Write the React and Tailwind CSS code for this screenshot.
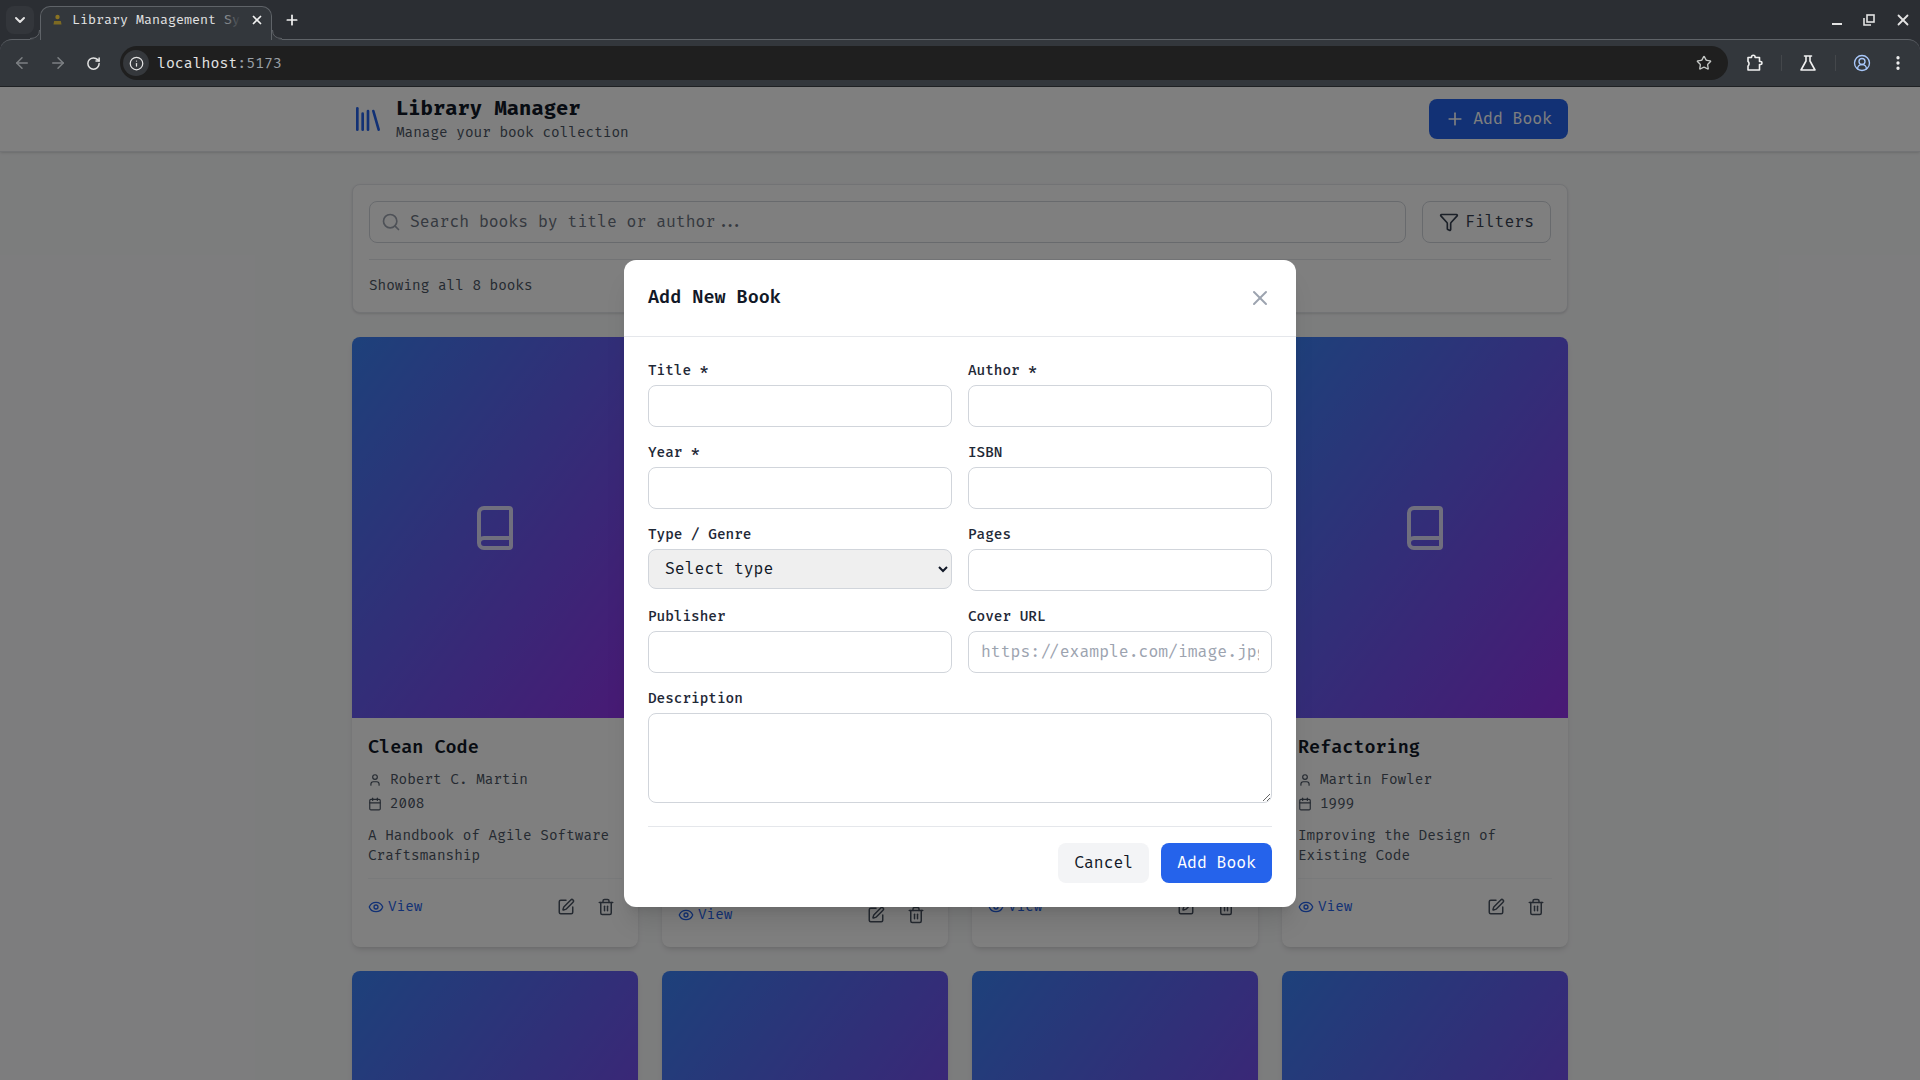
import React from "react";
import {
  ArrowLeft, ArrowRight, RotateCw, Info, Star, CircleUserRound, EllipsisVertical,
  ChevronDown, Plus, X, Library, Search, Filter, Book, User, Calendar, Eye, SquarePen, Trash2,
} from "lucide-react";

const books = [
  { title: "Clean Code", author: "Robert C. Martin", year: "2008", desc: ["A Handbook of Agile Software", "Craftsmanship"] },
  { title: "Pragmatic Programmer", author: "David Thomas", year: "1999", desc: ["Your Journey to Mastery"], push: true },
  { title: "Design Patterns", author: "Erich Gamma", year: "1994", desc: ["Elements of Reusable", "Object-Oriented Software"] },
  { title: "Refactoring", author: "Martin Fowler", year: "1999", desc: ["Improving the Design of", "Existing Code"] },
];

function BrowserChrome() {
  return (
    <div className="shrink-0 bg-[#2b2e33] text-[#e3e3e3]">
      <div className="relative flex h-[39px] items-start">
        <div className="ml-[6px] mt-[6px] flex h-[28px] w-[28px] items-center justify-center rounded-lg bg-[#33363b]">
          <ChevronDown size={16} strokeWidth={3} className="text-[#e3e3e3]" />
        </div>
        <div className="relative z-10 ml-[6px] mt-[6px] flex h-[34px] w-[232px] items-center rounded-t-[10px] border border-b-0 border-[#5f6368] bg-[#33373c] pb-[7px] pl-[11px]">
          <svg width="11" height="11" viewBox="0 0 10 11" className="shrink-0 -translate-y-px">
            <circle cx="5" cy="3" r="2.2" fill="#8a7322" />
            <path d="M1 10.5 L1.6 7 H8.4 L9 10.5 Z" fill="#7d6a22" />
          </svg>
          <div className="relative ml-[9px] w-[169px] overflow-hidden whitespace-nowrap text-[13px] leading-[18px] text-[#e3e3e3]">
            Library Management System
            <div className="absolute inset-y-0 right-0 w-[30px] bg-gradient-to-r from-[#33373c00] to-[#33373c]" />
          </div>
          <X size={14} strokeWidth={3} className="ml-[9px] text-[#f1f1f1]" />
          <svg width="10" height="10" viewBox="0 0 10 10" className="absolute bottom-0 left-[-11px]">
            <path d="M10 0 Q10 9.5 0 9.5 L0 10 L10 10Z" fill="#33373c" />
            <path d="M9.5 0 Q9.5 8.5 0 8.5" stroke="#5f6368" fill="none" />
          </svg>
          <svg width="10" height="10" viewBox="0 0 10 10" className="absolute bottom-0 right-[-11px]">
            <path d="M0 0 Q0 9.5 10 9.5 L10 10 L0 10Z" fill="#33373c" />
            <path d="M0.5 0 Q0.5 8.5 10 8.5" stroke="#5f6368" fill="none" />
          </svg>
        </div>
        <Plus size={16} strokeWidth={2.6} className="ml-[12px] mt-[12px] text-[#f1f1f1]" />
        <div className="absolute right-[78px] top-[23px] h-[2px] w-[10px] bg-[#e3e3e3]" />
        <svg width="12" height="12" viewBox="0 0 12 12" fill="none" stroke="#e3e3e3" strokeWidth="1.6" className="absolute right-[45px] top-[14px]">
          <rect x="4" y="1" width="7" height="7" />
          <path d="M1 4v7h7" />
        </svg>
        <X size={18} strokeWidth={2.4} className="absolute right-[8px] top-[11px] text-[#e3e3e3]" />
      </div>
      <div className="flex h-[48px] items-center rounded-t-[12px] border-t border-b border-t-[#5f6368] border-b-[#1f2124] bg-[#33373c]">
        <ArrowLeft size={18} strokeWidth={2} className="ml-[13px] text-[#7d8084]" />
        <ArrowRight size={18} strokeWidth={2} className="ml-[18px] text-[#7d8084]" />
        <RotateCw size={15} strokeWidth={2.4} className="ml-[19px] text-[#e3e3e3]" />
        <div className="ml-[19px] flex h-[34px] w-[1608px] items-center rounded-full bg-[#1f1f1f] pl-[3px] pr-[16px]">
          <div className="flex h-[26px] w-[26px] items-center justify-center rounded-full bg-[#35383c]">
            <Info size={15} strokeWidth={2} className="text-[#e3e3e3]" />
          </div>
          <div className="ml-[8px] translate-y-px text-[14.5px] leading-[20px]">
            <span className="text-[#e3e3e3]">localhost</span>
            <span className="text-[#9aa0a6]">:5173</span>
          </div>
          <Star size={16} strokeWidth={2} className="ml-auto text-[#c4c7c5]" />
        </div>
        <svg width="18" height="18" viewBox="0 0 18 18" fill="none" stroke="#f1f1f1" strokeWidth="1.6" strokeLinejoin="round" className="ml-[18px]">
          <path d="M2 3.5H5.5V3a1.8 1.8 0 0 1 3.6 0V3.5H13.5V7.5H14.5a1.5 1.5 0 0 1 0 3H13.5V16H2V12a3 3 0 0 0 0-4.6Z" />
        </svg>
        <div className="ml-[17px] h-[16px] w-px bg-[#44474b]" />
        <svg width="18" height="18" viewBox="0 0 18 18" fill="none" stroke="#f1f1f1" strokeWidth="1.6" strokeLinejoin="round" strokeLinecap="round" className="ml-[17px]">
          <path d="M5.5 2H12.5M7 2V7L2 16H16L11 7V2" />
        </svg>
        <div className="ml-[18px] h-[16px] w-px bg-[#44474b]" />
        <CircleUserRound size={18} strokeWidth={1.8} className="ml-[17px] text-[#a8c7fa]" />
        <EllipsisVertical size={18} strokeWidth={2.4} className="ml-[18px] text-[#f1f1f1]" />
      </div>
    </div>
  );
}

function BookCard({ book }) {
  return (
    <div className="flex flex-col overflow-hidden rounded-lg bg-white shadow-md">
      <div className="flex aspect-[3/4] items-center justify-center bg-linear-to-br/srgb from-[#3b82f6] to-[#9333ea]">
        <Book size={48} className="text-white/80" />
      </div>
      {book.title && (
        <div className="px-4 pb-[15px] pt-4">
          <h3 className="mb-2 text-lg font-semibold leading-7 text-[#111827]">{book.title}</h3>
          <div className="mb-1 flex items-center gap-2 text-sm leading-5 text-[#4b5563]">
            <User size={14} />
            <span>{book.author}</span>
          </div>
          <div className="mb-3 flex items-center gap-2 text-sm leading-5 text-[#4b5563]">
            <Calendar size={14} />
            <span>{book.year}</span>
          </div>
          <div className={`text-sm leading-5 text-[#4b5563] ${book.push ? "h-[48px]" : "h-[40px]"}`}>
            {book.desc.map((d) => (
              <div key={d}>{d}</div>
            ))}
          </div>
          <div className="mt-3 flex items-center justify-between border-t border-[#f3f4f6] pt-[11px]">
            <div className="flex items-center gap-1 text-sm leading-5 text-[#2563eb]">
              <Eye size={16} />
              <span>View</span>
            </div>
            <div className="-mr-px flex items-center gap-1.5">
              <div className="p-2 text-[#4b5563]"><SquarePen size={18} /></div>
              <div className="p-2 text-[#4b5563]"><Trash2 size={18} /></div>
            </div>
          </div>
        </div>
      )}
    </div>
  );
}

function Field({ label, children }) {
  return (
    <div>
      <label className="mb-1 block text-sm font-medium leading-5 text-[#1f2937]">{label}</label>
      {children}
    </div>
  );
}

const inputCls = "block w-full rounded-lg border border-[#d1d5db] bg-white px-3 py-2 text-base leading-6 text-[#111827] outline-none placeholder:text-[#9ca3af]";

function Modal() {
  return (
    <div className="absolute inset-0 flex items-center justify-center bg-black/50">
      <div className="w-[672px] rounded-xl bg-white shadow-xl">
        <div className="flex items-center justify-between border-b border-[#e5e7eb] p-6">
          <h2 className="text-lg font-semibold leading-7 text-[#111827]">Add New Book</h2>
          <X size={24} className="text-[#9ca3af]" />
        </div>
        <div className="p-6">
          <div className="grid grid-cols-2 gap-4">
            <Field label="Title *"><input className={inputCls} /></Field>
            <Field label="Author *"><input className={inputCls} /></Field>
            <Field label="Year *"><input className={inputCls} /></Field>
            <Field label="ISBN"><input className={inputCls} /></Field>
            <Field label="Type / Genre">
              <select className="block h-[40px] w-full rounded-lg border border-[#d1d5db] bg-[#efefef] px-3 text-base text-[#111827]">
                <option>Select type</option>
              </select>
            </Field>
            <Field label="Pages"><input className={inputCls} /></Field>
            <Field label="Publisher"><input className={inputCls} /></Field>
            <Field label="Cover URL"><input className={inputCls} placeholder="https://example.com/image.jpg" /></Field>
          </div>
          <div className="mt-4">
            <Field label="Description"><textarea rows={3} className={inputCls} /></Field>
          </div>
          <div className="mt-[23px] flex justify-end gap-3 border-t border-[#e5e7eb] pt-4">
            <button className="rounded-lg bg-[#f3f4f6] px-4 py-2 text-base leading-6 text-[#111827]">Cancel</button>
            <button className="rounded-lg bg-[#2563eb] px-4 py-2 text-base leading-6 text-white">Add Book</button>
          </div>
        </div>
      </div>
    </div>
  );
}

export default function App() {
  return (
    <div className="flex h-screen flex-col overflow-hidden font-['Fira_Code','Fira_Mono','DejaVu_Sans_Mono',monospace]">
      <BrowserChrome />
      <div className="relative min-h-0 flex-1 overflow-hidden bg-[#f9fafb]">
        <header className="border-b border-[#e5e7eb] bg-white shadow-sm">
          <div className="mx-auto flex h-16 w-[1280px] items-center justify-between px-8">
            <div className="flex items-center gap-3">
              <Library size={32} className="text-[#2563eb]" />
              <div>
                <h1 className="text-xl font-bold leading-7 text-[#111827]">Library Manager</h1>
                <p className="text-sm leading-5 text-[#4b5563]">Manage your book collection</p>
              </div>
            </div>
            <button className="flex items-center gap-2 rounded-lg bg-[#2563eb] px-4 py-2 text-base leading-6 text-white">
              <Plus size={20} />
              Add Book
            </button>
          </div>
        </header>
        <main className="mx-auto w-[1280px] px-8 py-8">
          <div className="mb-6 rounded-lg border border-[#e5e7eb] bg-white p-4 shadow-sm">
            <div className="flex gap-4">
              <div className="relative flex-1">
                <Search size={20} className="absolute left-3 top-[11px] text-[#9ca3af]" />
                <input
                  className="block w-full rounded-lg border border-[#d1d5db] py-2 pl-10 pr-4 text-base leading-6 outline-none placeholder:text-[#6b7280]"
                  placeholder="Search books by title or author..."
                />
              </div>
              <button className="flex items-center gap-1.5 rounded-lg border border-[#d1d5db] px-4 py-2 text-base leading-6 text-[#374151]">
                <Filter size={20} />
                Filters
              </button>
            </div>
            <div className="mt-4 border-t border-[#e5e7eb] pt-4 text-sm leading-5 text-[#4b5563]">Showing all 8 books</div>
          </div>
          <div className="grid grid-cols-4 gap-6">
            {books.map((b) => (
              <BookCard key={b.title} book={b} />
            ))}
            {[1, 2, 3, 4].map((i) => (
              <BookCard key={i} book={{}} />
            ))}
          </div>
        </main>
        <Modal />
      </div>
    </div>
  );
}
